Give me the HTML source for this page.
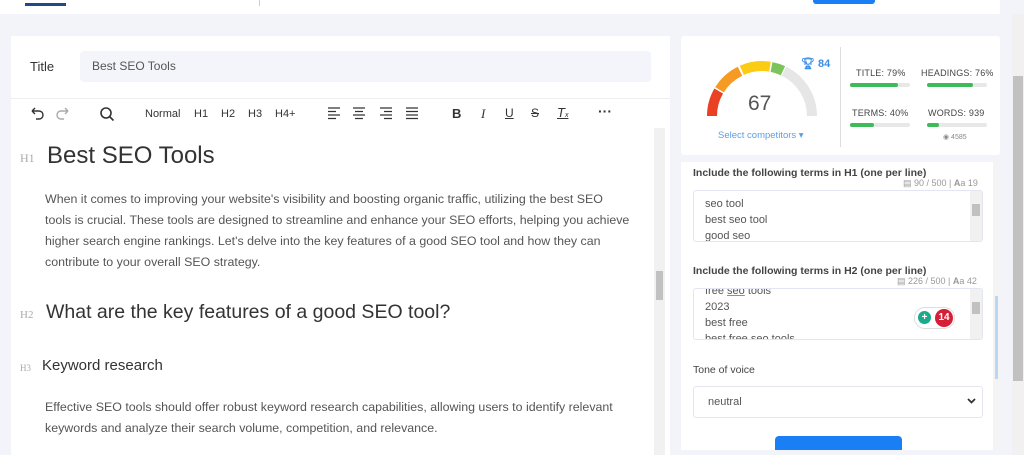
<!DOCTYPE html>
<html><head><meta charset="utf-8"><style>
*{margin:0;padding:0;box-sizing:border-box}
body{width:1024px;height:455px;overflow:hidden;background:#f3f4f9;font-family:"Liberation Sans",sans-serif;position:relative;color:#333}
.a{position:absolute}
.nw{white-space:nowrap}
.p{font-size:12.4px;color:#555;line-height:21px}
.tb{font-size:11px;color:#333;top:108px}
.bar{height:4px;background:#e8e8e8;border-radius:2px}
.bar i{display:block;height:4px;background:#3dba5a;border-radius:2px}
.st{font-size:9px;color:#444;letter-spacing:.2px}
.lbl{font-size:10.5px;color:#444;font-weight:bold}
.cnt{font-size:9px;color:#999}
.ta{border:1px solid #e3e6f0;border-radius:3px;background:#fff;overflow:hidden}
.ta div{font-size:11px;color:#555;line-height:16px}
.sb{position:absolute;right:0;top:0;width:12px;height:100%;background:#f1f1f1}
</style></head><body>
<!-- top bar -->
<div class="a" style="left:0;top:0;width:1000px;height:14px;background:#fff"></div>
<div class="a" style="left:25px;top:3px;width:41px;height:3px;background:#1e4a86"></div>
<div class="a" style="left:259px;top:0;width:1px;height:6px;background:#ccc"></div>
<div class="a" style="left:813px;top:0;width:62px;height:4px;background:#1a7ef5;border-radius:0 0 3px 3px"></div>

<!-- left panel -->
<div class="a" style="left:11px;top:36px;width:659px;height:419px;background:#fff"></div>
<div class="a" style="left:30px;top:59px;font-size:13px;color:#333">Title</div>
<div class="a" style="left:80px;top:51px;width:571px;height:31px;background:#f4f5fa;border-radius:4px"></div>
<div class="a" style="left:92px;top:59px;font-size:12px;color:#555">Best SEO Tools</div>
<div class="a" style="left:11px;top:98px;width:659px;height:1px;background:#eee"></div>
<!-- toolbar -->
<svg class="a" style="left:28px;top:106px" width="48" height="16" viewBox="0 0 48 16" fill="none" stroke="#333" stroke-width="1.4"><path d="M4 5h7a4 4 0 0 1 0 8H8M4 5l3-3M4 5l3 3"/><path d="M40 5h-7a4 4 0 0 0 0 8h3M40 5l-3-3M40 5l-3 3" stroke="#aaa"/></svg>
<svg class="a" style="left:99px;top:106px" width="16" height="16" fill="none" stroke="#333" stroke-width="1.6"><circle cx="7" cy="7" r="5"/><path d="M10.5 10.5l4 4"/></svg>
<div class="a tb" style="left:145px">Normal</div>
<div class="a tb" style="left:194px">H1</div>
<div class="a tb" style="left:221px">H2</div>
<div class="a tb" style="left:248px">H3</div>
<div class="a tb" style="left:275px">H4+</div>
<svg class="a" style="left:328px;top:107px" width="94" height="13" stroke="#333" stroke-width="1.3"><path d="M0 1h12M0 4.5h8M0 8h12M0 11.5h8"/><path d="M25 1h12M27 4.5h8M25 8h12M27 11.5h8"/><path d="M52 1h12M56 4.5h8M52 8h12M56 11.5h8"/><path d="M78 1h12M78 4.5h12M78 8h12M78 11.5h12"/></svg>
<div class="a" style="left:452px;top:106px;font-size:13px;font-weight:bold">B</div>
<div class="a" style="left:481px;top:106px;font-size:13px;font-style:italic;font-family:'Liberation Serif',serif">I</div>
<div class="a" style="left:505px;top:106px;font-size:12px;text-decoration:underline">U</div>
<div class="a" style="left:531px;top:106px;font-size:12px;text-decoration:line-through">S</div>
<div class="a" style="left:557px;top:105px;font-size:13px;font-style:italic;text-decoration:underline">T<span style="font-size:7px">x</span></div>
<div class="a" style="left:598px;top:103px;font-size:14px;font-weight:bold">···</div>
<!-- scrollbar -->
<div class="a" style="left:654px;top:128px;width:11px;height:327px;background:#f1f1f1"></div>
<div class="a" style="left:656px;top:271px;width:7px;height:29px;background:#c1c1c1"></div>
<!-- content -->
<div class="a nw" style="left:20px;top:151px;font-size:12px;color:#aaa;font-family:'Liberation Serif',serif">H1</div>
<div class="a nw" style="left:47px;top:142px;font-size:24px;color:#333">Best SEO Tools</div>
<div class="a p nw" style="left:45px;top:189px">When it comes to improving your website's visibility and boosting organic traffic, utilizing the best SEO<br>tools is crucial. These tools are designed to streamline and enhance your SEO efforts, helping you achieve<br>higher search engine rankings. Let's delve into the key features of a good SEO tool and how they can<br>contribute to your overall SEO strategy.</div>
<div class="a nw" style="left:20px;top:309px;font-size:11px;color:#aaa;font-family:'Liberation Serif',serif">H2</div>
<div class="a nw" style="left:46px;top:301px;font-size:19.5px;color:#333">What are the key features of a good SEO tool?</div>
<div class="a nw" style="left:20px;top:363px;font-size:9px;color:#aaa;font-family:'Liberation Serif',serif">H3</div>
<div class="a nw" style="left:42px;top:357px;font-size:15px;color:#333">Keyword research</div>
<div class="a p nw" style="left:45px;top:397px">Effective SEO tools should offer robust keyword research capabilities, allowing users to identify relevant<br>keywords and analyze their search volume, competition, and relevance.</div>

<!-- right top card -->
<div class="a" style="left:681px;top:36px;width:319px;height:119px;background:#fff;border-radius:3px"></div>
<svg class="a" style="left:681px;top:36px" width="160" height="119" viewBox="681 36 160 119" fill="none" stroke-width="10">
<path d="M712 116A50 50 0 0 1 718.7 91" stroke="#ea4124"/>
<path d="M719.5 89.8A50 50 0 0 1 740 71.2" stroke="#f59a23"/>
<path d="M741.8 70.3A50 50 0 0 1 770 66.7" stroke="#fccb14"/>
<path d="M771.5 67A50 50 0 0 1 783 70.7" stroke="#7cc35c"/>
<path d="M784 71.2A50 50 0 0 1 812 116" stroke="#e6e6e6"/>
</svg>
<div class="a" style="left:748px;top:92px;font-size:21px;color:#555">67</div>
<div class="a nw" style="left:718px;top:130px;font-size:9.5px;color:#5b9ee6">Select competitors ▾</div>
<div class="a nw" style="left:801px;top:57px;font-size:11px;color:#3d8ee6;font-weight:bold">🏆︎ 84</div>
<div class="a" style="left:840px;top:47px;width:1px;height:100px;background:#ddd"></div>
<div class="a st" style="left:856px;top:68px">TITLE: 79%</div>
<div class="a bar" style="left:850px;top:83px;width:60px"><i style="width:48px"></i></div>
<div class="a st" style="left:921px;top:68px">HEADINGS: 76%</div>
<div class="a bar" style="left:927px;top:83px;width:60px"><i style="width:46px"></i></div>
<div class="a st" style="left:852px;top:108px">TERMS: 40%</div>
<div class="a bar" style="left:850px;top:123px;width:60px"><i style="width:24px"></i></div>
<div class="a st" style="left:928px;top:108px">WORDS: 939</div>
<div class="a bar" style="left:927px;top:123px;width:60px"><i style="width:12px"></i></div>
<div class="a" style="left:943px;top:133px;font-size:7px;color:#888">◉ 4585</div>

<!-- page scrollbar -->
<div class="a" style="left:1012px;top:14px;width:12px;height:441px;background:#f1f1f1"></div>
<div class="a" style="left:1013px;top:76px;width:10px;height:305px;background:#c1c1c1"></div>

<!-- right lower card -->
<div class="a" style="left:681px;top:162px;width:312px;height:288px;background:#fff"></div>
<div class="a" style="left:993px;top:162px;width:7px;height:288px;background:#f4f4f4"></div>
<div class="a" style="left:995px;top:296px;width:3px;height:83px;background:#bcd7f5"></div>
<div class="a lbl nw" style="left:693px;top:167px">Include the following terms in H1 (one per line)</div>
<div class="a cnt nw" style="left:903px;top:178px">▤ 90 / 500 | <b>A</b>a 19</div>
<div class="a ta" style="left:693px;top:190px;width:290px;height:52px">
<div style="position:absolute;left:11px;top:5px">seo tool<br>best seo tool<br>good seo</div>
<div class="sb"><div style="position:absolute;left:2px;top:13px;width:8px;height:12px;background:#c1c1c1"></div></div></div>
<div class="a lbl nw" style="left:693px;top:265px">Include the following terms in H2 (one per line)</div>
<div class="a cnt nw" style="left:897px;top:276px">▤ 226 / 500 | <b>A</b>a 42</div>
<div class="a ta" style="left:693px;top:288px;width:290px;height:52px">
<div style="position:absolute;left:11px;top:-6px">free <span style="text-decoration:underline #e66">seo</span> tools<br>2023<br>best free<br>best free seo tools</div>
<div class="sb"><div style="position:absolute;left:2px;top:13px;width:8px;height:12px;background:#c1c1c1"></div></div></div>
<div class="a" style="left:914px;top:307px;width:41px;height:22px;background:#fff;border:1px solid #ddd;border-radius:11px"></div>
<div class="a" style="left:918px;top:311px;width:13px;height:13px;border-radius:50%;background:#1bab8a;color:#fff;font-size:10px;line-height:13px;text-align:center;font-weight:bold">+</div>
<div class="a" style="left:935px;top:309px;width:18px;height:18px;border-radius:50%;background:#d41f36;color:#fff;font-size:10px;line-height:18px;text-align:center;font-weight:bold">14</div>
<div class="a lbl nw" style="left:693px;top:364px;font-weight:normal;color:#444">Tone of voice</div>
<div class="a" style="left:693px;top:386px;width:290px;height:32px;border:1px solid #e3e6f0;border-radius:3px"></div>
<div class="a" style="left:708px;top:396px;font-size:11px;color:#555">neutral</div>
<svg class="a" style="left:967px;top:398px" width="9" height="7" fill="none" stroke="#333" stroke-width="1.8"><path d="M1 1l3.5 3.5L8 1"/></svg>
<div class="a" style="left:775px;top:436px;width:127px;height:14px;background:#1a7ef5;border-radius:4px 4px 0 0"></div>
</body></html>
